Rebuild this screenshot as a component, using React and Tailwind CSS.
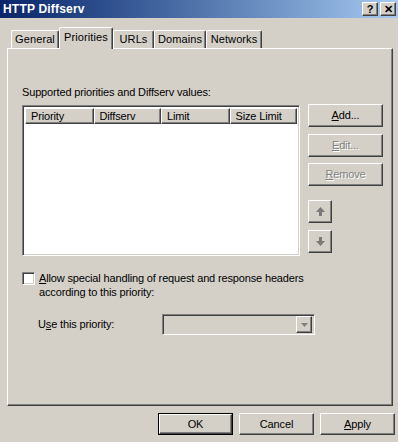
const raised =
  'border border-t-white border-l-white border-r-[#404040] border-b-[#404040] shadow-[inset_-1px_-1px_0_#808080]';
const sunken =
  'border border-t-[#808080] border-l-[#808080] border-r-white border-b-white shadow-[inset_1px_1px_0_#404040,inset_-1px_-1px_0_#d4d0c8]';

function Button({ children, disabled, className = '' }) {
  return (
    <div
      className={`${raised} flex items-center justify-center bg-[#d4d0c8] ${
        disabled ? 'text-[#808080] [text-shadow:1px_1px_0_#fff]' : 'text-black'
      } ${className}`}
    >
      {children}
    </div>
  );
}

function Tab({ label, active, w }) {
  return (
    <div
      className={`${w} flex items-center justify-center border-l border-t border-r border-l-white border-t-white border-r-[#404040] rounded-t-[2px] bg-[#d4d0c8] shadow-[inset_-1px_0_0_#808080] ${
        active ? 'relative z-10 h-[22px] -mb-[1px] pb-[2px]' : 'h-[18px]'
      }`}
    >
      {label}
    </div>
  );
}

function ArrowIcon({ down }) {
  return (
    <svg width="9" height="9" viewBox="0 0 9 9" className={down ? 'rotate-180' : ''}>
      <path d="M4.5 0 L9 5 L6 5 L6 9 L3 9 L3 5 L0 5 Z" fill="#7a7a7a" />
    </svg>
  );
}

const columns = [
  { name: 'Priority', w: 'w-[69px]' },
  { name: 'Diffserv', w: 'w-[68px]' },
  { name: 'Limit', w: 'w-[69px]' },
  { name: 'Size Limit', w: 'w-[68px]' },
];

export default function App() {
  return (
    <div className="w-[398px] h-[442px] bg-[#d4d0c8] overflow-hidden text-[11px] leading-[13px] tracking-[-0.15px] text-black font-['Liberation_Sans',Arial,sans-serif]">
      {/* title bar */}
      <div className="h-[18px] flex items-center justify-between pl-[3px] pr-[2px] bg-gradient-to-r from-[#0a246a] to-[#a6caf0]">
        <span className="text-white font-bold text-[12px] tracking-[0.2px]">HTTP Diffserv</span>
        <div className="flex gap-[2px]">
          <Button className="w-[16px] h-[14px] font-bold text-[11px] leading-none">?</Button>
          <Button className="w-[16px] h-[14px] font-bold text-[11px] leading-none">✕</Button>
        </div>
      </div>

      {/* tabs */}
      <div className="flex items-end pl-[11px] mt-[9px] h-[21px] tracking-[0.1px]">
        <Tab label="General" w="w-[48px]" />
        <Tab label="Priorities" w="w-[54px]" active />
        <Tab label="URLs" w="w-[41px]" />
        <Tab label="Domains" w="w-[52px]" />
        <Tab label="Networks" w="w-[56px]" />
      </div>

      {/* tab panel */}
      <div className="ml-[7px] w-[386px] h-[358px] border border-t-white border-l-white border-r-[#404040] border-b-[#404040] shadow-[inset_-1px_-1px_0_#808080] pl-[14px] pt-[37px]">
        <div className="mb-[6px]">Supported priorities and Diffserv values:</div>

        <div className="flex">
          {/* list view */}
          <div className={`${sunken} w-[278px] h-[151px] bg-white p-[2px]`}>
            <div className="flex h-[16px]">
              {columns.map((c) => (
                <div key={c.name} className={`${raised} ${c.w} h-[16px] flex items-center pl-[5px] bg-[#d4d0c8]`}>
                  {c.name}
                </div>
              ))}
              <div className="flex-1 bg-[#d4d0c8]" />
            </div>
          </div>

          {/* side buttons */}
          <div className="ml-[8px] -mt-[1px] flex flex-col">
            <Button className="w-[75px] h-[23px]">
              <span><u>A</u>dd...</span>
            </Button>
            <Button disabled className="w-[75px] h-[23px] mt-[7px]">
              <span><u>E</u>dit...</span>
            </Button>
            <Button disabled className="w-[75px] h-[23px] mt-[6px]">
              <span><u>R</u>emove</span>
            </Button>
            <Button className="w-[24px] h-[23px] mt-[14px]">
              <ArrowIcon />
            </Button>
            <Button className="w-[24px] h-[23px] mt-[7px]">
              <ArrowIcon down />
            </Button>
          </div>
        </div>

        {/* checkbox */}
        <div className="flex mt-[15px]">
          <div className={`${sunken} w-[13px] h-[13px] bg-white shrink-0 mt-[1px]`} />
          <div className="ml-[4px] leading-[14px]">
            <div><u>A</u>llow special handling of request and response headers</div>
            <div>according to this priority:</div>
          </div>
        </div>

        {/* use this priority */}
        <div className="flex items-center mt-[15px] pl-[16px]">
          <span className="w-[124px]">U<u>s</u>e this priority:</span>
          <div className={`${sunken} w-[153px] h-[21px] bg-[#d4d0c8] flex justify-end items-center pr-[2px]`}>
            <div className={`${raised} w-[16px] h-[17px] flex items-center justify-center`}>
              <svg width="7" height="4" viewBox="0 0 7 4">
                <path d="M0 0 L7 0 L3.5 4 Z" fill="#808080" />
              </svg>
            </div>
          </div>
        </div>
      </div>

      {/* bottom buttons */}
      <div className="flex justify-end gap-[6px] pr-[3px] mt-[7px]">
        <div className="border border-black">
          <Button className="w-[73px] h-[20px]">OK</Button>
        </div>
        <Button className="w-[75px] h-[22px]">Cancel</Button>
        <Button className="w-[75px] h-[22px]">
          <span><u>A</u>pply</span>
        </Button>
      </div>
    </div>
  );
}
